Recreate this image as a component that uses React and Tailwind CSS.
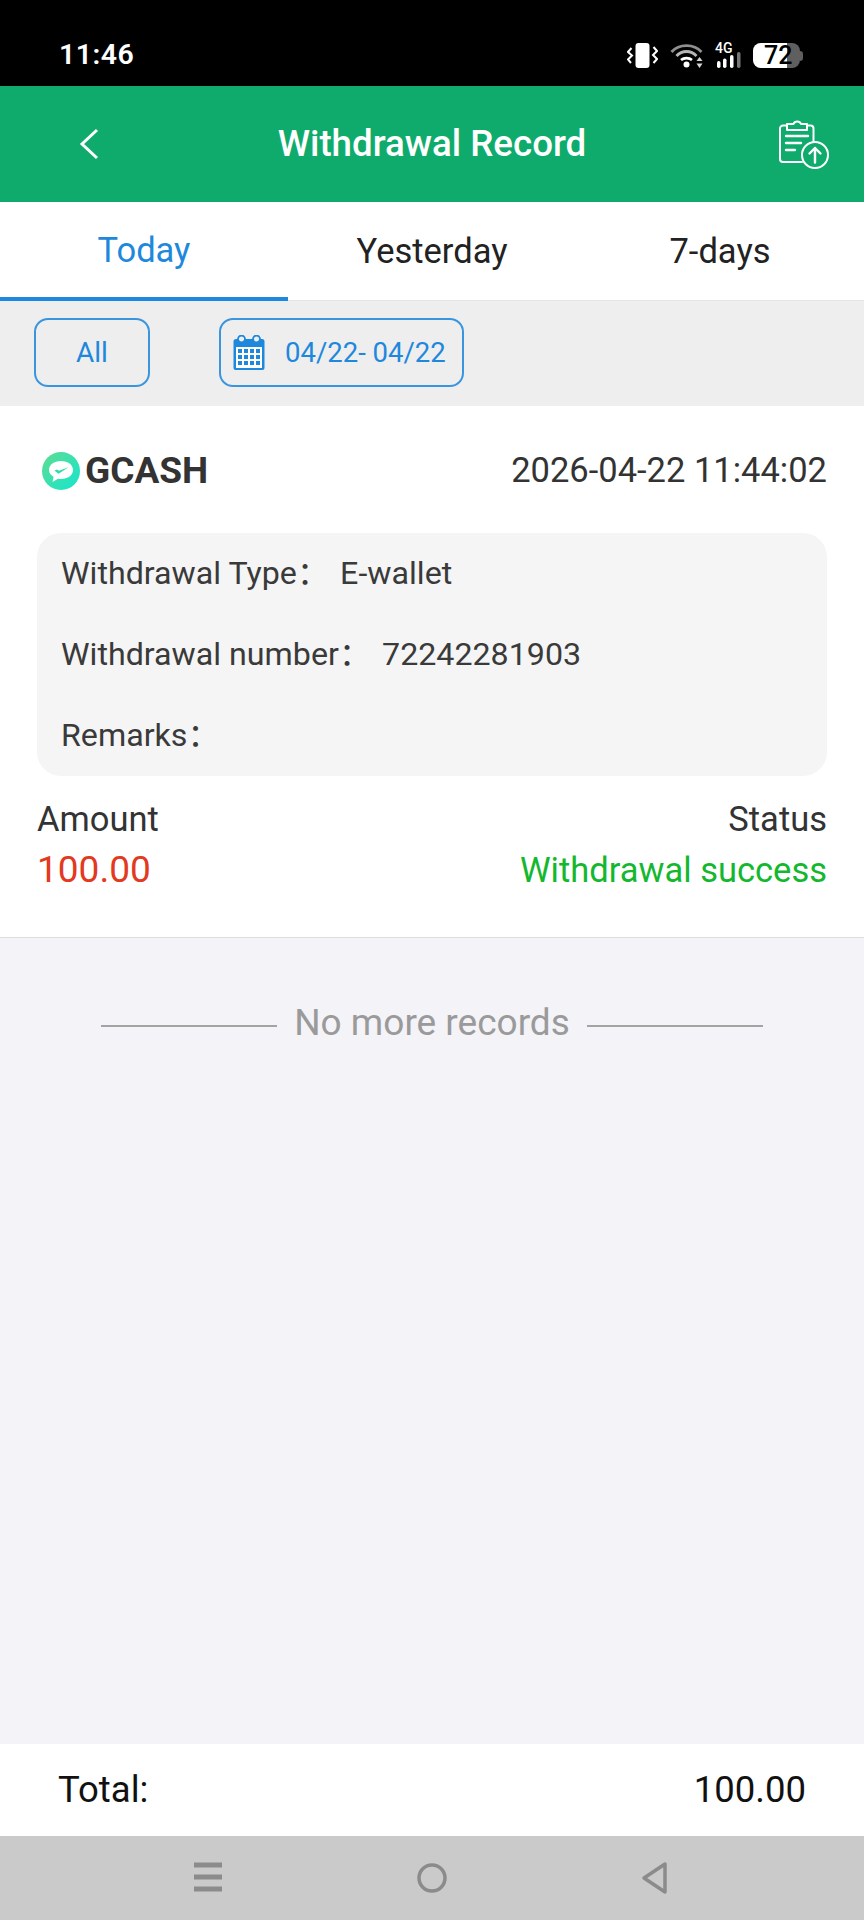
import React from 'react';

const VibrateIcon = () => (
  <svg width="31" height="25" viewBox="0 0 31 25" fill="none">
    <rect x="8.500" y="0" width="14" height="25" rx="3" fill="#fff" />
    <path d="M4.500 5L1 9L5 12.500L1 16.500L4 20" stroke="#fff" strokeWidth="2" />
    <path d="M26.500 4L30 8L26 12L30 16L26.500 20" stroke="#fff" strokeWidth="2" />
  </svg>
);

const WifiIcon = () => (
  <svg width="33" height="25" viewBox="0 0 33 25" fill="none">
    <path d="M1.500 9C9 0.500 24 0.500 31.500 9" stroke="#8f8f8f" strokeWidth="2.800" />
    <path d="M6.500 13C12 7 21 7 26.500 13" stroke="#b5b5b5" strokeWidth="2.800" />
    <path d="M11 17C14 14.500 19 14.500 22 17" stroke="#fff" strokeWidth="2.600" />
    <circle cx="16.500" cy="21.500" r="3" fill="#fff" />
    <path d="M29.500 14L32.500 18H26.500Z M29.500 25L26.500 20.500H32.500Z" fill="#d5d5d5" />
  </svg>
);

const SignalIcon = () => (
  <div className="relative w-[26px] h-[25px]">
    <span className="absolute left-0 top-[-1px] text-white text-[14px] leading-[13px] font-medium">4G</span>
    <svg className="absolute left-0 top-0" width="26" height="25" viewBox="0 0 26 25">
      <rect x="2" y="18" width="3.500" height="7" rx="1.700" fill="#fff" />
      <rect x="8" y="15.500" width="3.500" height="9.500" rx="1.700" fill="#fff" />
      <rect x="15" y="12" width="3.500" height="13" rx="1.700" fill="#fff" />
      <rect x="22" y="9" width="3.500" height="16" rx="1.700" fill="#777" />
    </svg>
  </div>
);

const Battery = () => (
  <div className="relative w-[50px] h-[25px]">
    <div className="absolute left-0 top-0 h-[25px] w-[47px] rounded-[8px] bg-[#5f5f5f]" />
    <div className="absolute left-0 top-0 h-[25px] w-[34px] rounded-l-[8px] bg-white" />
    <div className="absolute right-0 top-[8px] h-[10px] w-[3px] rounded-r-full bg-[#5f5f5f]" />
    <span className="absolute left-[11px] top-0 text-black text-[25px] leading-[25px] font-medium">72</span>
  </div>
);

const ClipboardUploadIcon = () => (
  <svg width="50" height="50" viewBox="0 0 50 50" fill="none" stroke="#fff" strokeWidth="2" strokeLinecap="round" strokeLinejoin="round">
    <path d="M23 43H4a3 3 0 0 1-3-3V9.500a3 3 0 0 1 3-3h4" />
    <path d="M29 6.500h2.500a3 3 0 0 1 3 3V23" />
    <path d="M8 11V5h6.500a4 4 0 0 1 7.500 0H28v6Z" />
    <path d="M7 17h22M7 24h15M7 31h9" strokeWidth="2.400" />
    <circle cx="36" cy="36" r="13" />
    <path d="M36 43.500V29M30.500 34.500l5.500-5.500 5.500 5.500" strokeWidth="2.400" />
  </svg>
);

const CalendarIcon = () => (
  <svg width="32" height="36" viewBox="0 0 32 36">
    <path d="M3 4h26a2.500 2.500 0 0 1 2.500 2.500V33a2 2 0 0 1-2 2H2.500a2 2 0 0 1-2-2V6.500A2.500 2.500 0 0 1 3 4Z" fill="#1e88dc" />
    <rect x="3" y="12" width="26" height="21" fill="#fff" />
    <circle cx="8.500" cy="4" r="3.500" fill="#eee" stroke="#1e88dc" strokeWidth="1.800" />
    <circle cx="23.500" cy="4" r="3.500" fill="#eee" stroke="#1e88dc" strokeWidth="1.800" />
    <path fill="#1e88dc" d="M5 14h4v4H5zM11 14h4v4h-4zM17 14h4v4h-4zM23 14h4v4h-4zM5 20h4v4H5zM11 20h4v4h-4zM17 20h4v4h-4zM23 20h4v4h-4zM5 26h4v4H5zM11 26h4v4h-4zM17 26h4v4h-4zM23 26h4v4h-4z" />
  </svg>
);

const GcashLogo = () => (
  <svg width="38" height="38" viewBox="0 0 38 38">
    <defs>
      <linearGradient id="gcashFill" x1="0" y1="0" x2="1" y2="1">
        <stop offset="0" stopColor="#5fdc8f" />
        <stop offset="1" stopColor="#14e6d0" />
      </linearGradient>
    </defs>
    <circle cx="19" cy="19" r="19" fill="url(#gcashFill)" />
    <path d="M19 9c7 0 12 3.800 12 9s-5 9-12 9c-1 0-2 0-3-.2L10.500 30l1-5.200C8.500 23 7 20.800 7 18c0-5.200 5-9 12-9Z" fill="#fff" />
    <path d="M12.500 18.500l4 3.200 10-6.500-9.500 3.500-2-1.200Z" fill="#2fdca8" />
  </svg>
);

const Tab = ({ label, active }) => (
  <div className={`flex-1 flex items-center justify-center pt-[2px] text-[34.500px] ${active ? 'text-[#1e88dc]' : 'text-[#222]'}`}>
    {label}
  </div>
);

const InfoRow = ({ label, value, gap }) => (
  <div className="h-[81px] leading-[81px] text-[#3a3a3a] text-[32.200px]">
    {label}
    <span className="font-['Noto_Sans_CJK_SC',sans-serif] leading-[32px]">：</span>
    {value && <span className={gap}>{value}</span>}
  </div>
);

export default function App() {
  return (
    <div className="w-[864px] h-[1920px] flex flex-col bg-[#f3f3f8] font-['Roboto',sans-serif]">
      {/* status bar */}
      <div className="h-[86px] bg-black flex items-center justify-between pl-[59px] pr-[61px] pt-[25px]">
        <span className="text-white text-[28.500px] font-semibold tracking-[0.5px]">11:46</span>
        <div className="flex items-center gap-[12px]">
          <VibrateIcon />
          <WifiIcon />
          <SignalIcon />
          <Battery />
        </div>
      </div>

      {/* header */}
      <div className="h-[116px] bg-[#0fab6d] flex items-center px-[35px]">
        <div className="flex-1">
          <svg className="ml-[44px]" width="20" height="32" viewBox="0 0 20 32" fill="none">
            <path d="M18 2L3 16L18 30" stroke="#fff" strokeWidth="3" />
          </svg>
        </div>
        <h1 className="text-white text-[36.700px] font-medium">Withdrawal Record</h1>
        <div className="flex-1 flex justify-end">
          <ClipboardUploadIcon />
        </div>
      </div>

      {/* tabs */}
      <div className="h-[99px] bg-white flex border-b border-[#e4e4e4]">
        <div className="flex-1 flex border-b-[4px] border-[#1e88dc] mb-[-1px]">
          <Tab label="Today" active />
        </div>
        <Tab label="Yesterday" />
        <Tab label="7-days" />
      </div>

      {/* filters */}
      <div className="h-[105px] bg-[#eeeeee] flex items-start pt-[17px] pl-[34px] gap-[69px]">
        <button className="w-[116px] h-[69px] rounded-[14px] border-2 border-[#3a95df] text-[#1e88dc] text-[28px]">All</button>
        <button className="w-[245px] h-[69px] rounded-[14px] border-2 border-[#3a95df] text-[#1e88dc] text-[27.500px] flex items-center pl-[12px] gap-[20px]">
          <CalendarIcon />
          <span>04/22- 04/22</span>
        </button>
      </div>

      {/* record card */}
      <div className="h-[532px] bg-white border-b border-[#dedede] px-[37px]">
        <div className="h-[127px] flex items-center justify-between pt-[2px]">
          <div className="flex items-center gap-[5px] pl-[5px]">
            <GcashLogo />
            <span className="text-[#333] text-[37px] font-bold">GCASH</span>
          </div>
          <span className="text-[#333] text-[34.500px]">2026-04-22 11:44:02</span>
        </div>
        <div className="h-[243px] bg-[#f5f5f5] rounded-[24px] px-[24px]">
          <InfoRow label="Withdrawal Type" value="E-wallet" gap="ml-[11px]" />
          <InfoRow label="Withdrawal number" value="72242281903" gap="ml-[11px]" />
          <InfoRow label="Remarks" />
        </div>
        <div className="flex justify-between pt-[22px] text-[34.500px] leading-[42px]">
          <div>
            <div className="text-[#333]">Amount</div>
            <div className="text-[#e2391f] text-[37px] leading-[60px]">100.00</div>
          </div>
          <div className="text-right">
            <div className="text-[#333]">Status</div>
            <div className="text-[#13b82e] text-[34.500px] leading-[60px]">Withdrawal success</div>
          </div>
        </div>
      </div>

      {/* end of list */}
      <div className="flex-1 flex justify-center pt-[63px]">
        <div className="h-[44px] flex items-center gap-[17px]">
          <div className="w-[176px] h-[2px] bg-[#a3a3a3] mt-[6px]" />
          <span className="text-[#9a9a9a] text-[37px]">No more records</span>
          <div className="w-[176px] h-[2px] bg-[#a3a3a3] mt-[6px]" />
        </div>
      </div>

      {/* total */}
      <div className="h-[92px] bg-white flex items-center justify-between px-[58px] text-[#111] text-[36.500px]">
        <span>Total:</span>
        <span>100.00</span>
      </div>

      {/* navigation bar */}
      <div className="h-[84px] bg-[#cacaca] relative">
        <svg className="absolute left-[193px] top-[26px]" width="30" height="30" viewBox="0 0 30 30">
          <path d="M1 3H29M1 15H29M1 27H29" stroke="#8b8b8b" strokeWidth="5" />
        </svg>
        <svg className="absolute left-[417px] top-[26px]" width="30" height="32" viewBox="0 0 30 32" fill="none">
          <circle cx="15" cy="16" r="13" stroke="#8b8b8b" strokeWidth="3.500" />
        </svg>
        <svg className="absolute left-[640px] top-[25px]" width="28" height="34" viewBox="0 0 28 34" fill="none">
          <path d="M25 3V31L4 17Z" stroke="#8b8b8b" strokeWidth="3.500" strokeLinejoin="round" />
        </svg>
      </div>
    </div>
  );
}
